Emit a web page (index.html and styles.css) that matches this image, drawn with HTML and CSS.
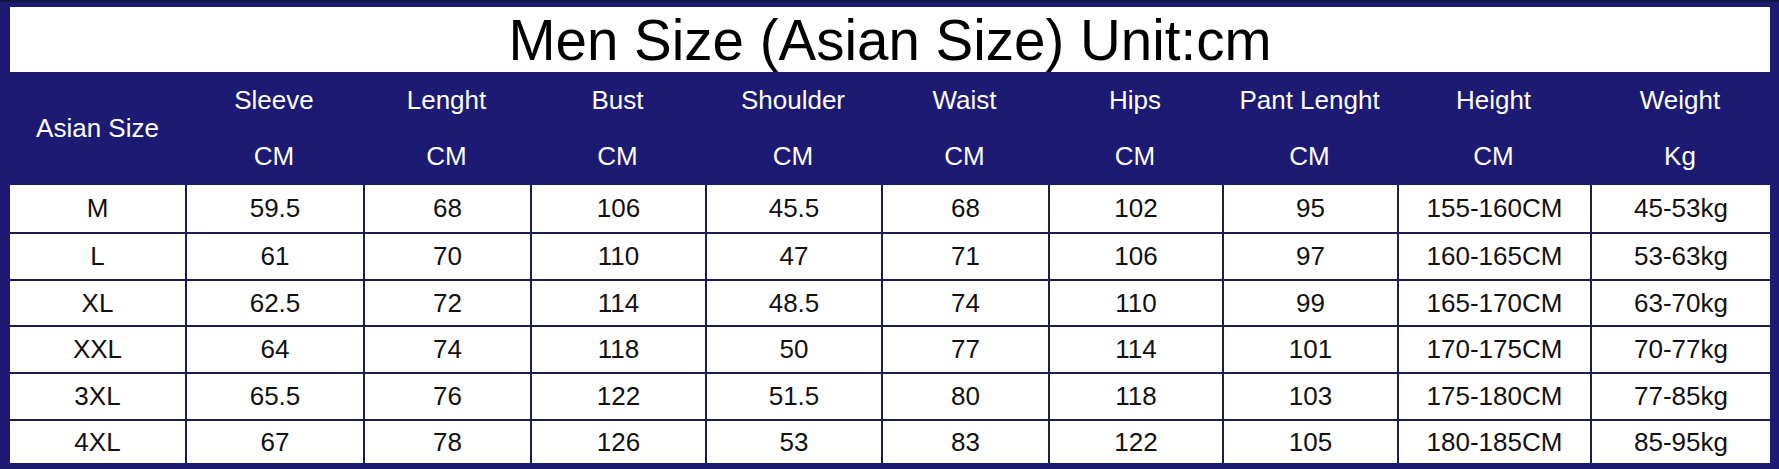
FILE: index.html
```html
<!DOCTYPE html>
<html>
<head>
<meta charset="utf-8">
<link rel="stylesheet" href="styles.css">
</head>
<body>
<div class="frame">
  <div class="title">Men Size (Asian Size) Unit:cm</div>
  <div class="chart">
    <div class="hcell span2">Asian Size</div>
    <div class="hcell">Sleeve</div>
    <div class="hcell">Lenght</div>
    <div class="hcell">Bust</div>
    <div class="hcell">Shoulder</div>
    <div class="hcell">Waist</div>
    <div class="hcell">Hips</div>
    <div class="hcell">Pant Lenght</div>
    <div class="hcell">Height</div>
    <div class="hcell">Weight</div>
    <div class="hcell unit">CM</div>
    <div class="hcell unit">CM</div>
    <div class="hcell unit">CM</div>
    <div class="hcell unit">CM</div>
    <div class="hcell unit">CM</div>
    <div class="hcell unit">CM</div>
    <div class="hcell unit">CM</div>
    <div class="hcell unit">CM</div>
    <div class="hcell unit">Kg</div>

    <div class="cell first">M</div><div class="cell">59.5</div><div class="cell">68</div><div class="cell">106</div><div class="cell">45.5</div><div class="cell">68</div><div class="cell">102</div><div class="cell">95</div><div class="cell">155-160CM</div><div class="cell">45-53kg</div>
    <div class="cell first">L</div><div class="cell">61</div><div class="cell">70</div><div class="cell">110</div><div class="cell">47</div><div class="cell">71</div><div class="cell">106</div><div class="cell">97</div><div class="cell">160-165CM</div><div class="cell">53-63kg</div>
    <div class="cell first">XL</div><div class="cell">62.5</div><div class="cell">72</div><div class="cell">114</div><div class="cell">48.5</div><div class="cell">74</div><div class="cell">110</div><div class="cell">99</div><div class="cell">165-170CM</div><div class="cell">63-70kg</div>
    <div class="cell first">XXL</div><div class="cell">64</div><div class="cell">74</div><div class="cell">118</div><div class="cell">50</div><div class="cell">77</div><div class="cell">114</div><div class="cell">101</div><div class="cell">170-175CM</div><div class="cell">70-77kg</div>
    <div class="cell first">3XL</div><div class="cell">65.5</div><div class="cell">76</div><div class="cell">122</div><div class="cell">51.5</div><div class="cell">80</div><div class="cell">118</div><div class="cell">103</div><div class="cell">175-180CM</div><div class="cell">77-85kg</div>
    <div class="cell first">4XL</div><div class="cell">67</div><div class="cell">78</div><div class="cell">126</div><div class="cell">53</div><div class="cell">83</div><div class="cell">122</div><div class="cell">105</div><div class="cell">180-185CM</div><div class="cell">85-95kg</div>
  </div>
</div>
</body>
</html>
```

FILE: styles.css
```css
html, body {
  margin: 0;
  padding: 0;
  background: #1c1a6e;
}

.frame {
  width: 1779px;
  height: 469px;
  box-sizing: border-box;
  background: #1c1a72;
  border-top: 2px solid #12193c;
  padding: 5px 9px 6px 10px;
  font-family: "Liberation Sans", Arial, sans-serif;
  overflow: hidden;
}

.title {
  height: 65px;
  box-sizing: border-box;
  padding-top: 2px;
  background: #ffffff;
  text-align: center;
  font-size: 56.5px;
  line-height: 63px;
  color: #000;
  white-space: nowrap;
}

.chart {
  display: grid;
  grid-template-columns: 175px 178px 167px 175px 176px 167px 174px 175px 193px 180px;
  grid-template-rows: 56px 57px 47px 47px 46px 47px 47px 44px;
}

.hcell {
  background: #1c1a72;
  color: #ffffff;
  font-size: 26px;
  display: flex;
  align-items: center;
  justify-content: center;
}

.hcell.span2 {
  grid-row: span 2;
}

.cell {
  background: #ffffff;
  color: #111111;
  font-size: 26px;
  display: flex;
  align-items: center;
  justify-content: center;
  border-left: 2px solid #1e1c4c;
  border-top: 2px solid #1e1c4c;
}

.cell.first {
  border-left: none;
}

.chart > .cell:nth-child(-n+29) {
  border-top: none;
}
```
